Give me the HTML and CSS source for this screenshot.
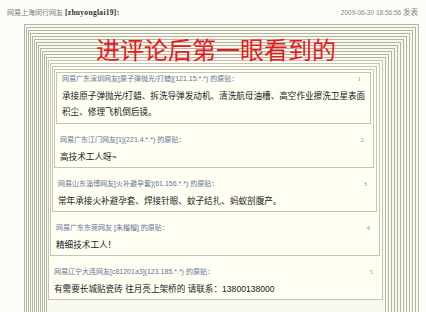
FILE: index.html
```html
<!DOCTYPE html>
<html lang="zh-CN">
<head>
    <meta charset="UTF-8">
    <meta name="viewport" content="width=device-width, initial-scale=1.0">
    <title>网易跟帖</title>
    <link rel="stylesheet" href="styles.css">
</head>
<body>

    <div class="post-head">
        <span class="author">网易上海闵行网友 <b>[zhuyonglai19]:</b></span>
        <span class="time">2009-06-30 18:56:56 <span class="cn">发表</span></span>
    </div>

    <div class="caption">进评论后第一眼看到的</div>

    <div class="thread">
    <div class="floor"><div class="floor"><div class="floor"><div class="floor">
    <div class="floor"><div class="floor"><div class="floor"><div class="floor">
    <div class="floor"><div class="floor"><div class="floor">
    <div class="floor tail">

        <div class="floor post">
        <div class="floor post">
        <div class="floor post">
        <div class="floor post">
        <div class="floor post first">
            <div class="floor-head">
                <span>网易广东深圳网友[原子弹抛光/打蜡](121.15.*.*) 的原贴：</span>
                <span class="num">1</span>
            </div>
            <p class="floor-text">承接原子弹抛光/打蜡、拆洗导弹发动机、清洗航母油槽、高空作业擦洗卫星表面积尘、修理飞机倒后镜。</p>
        </div>
            <div class="floor-head">
                <span>网易广东江门网友[1](221.4.*.*) 的原贴：</span>
                <span class="num">2</span>
            </div>
            <p class="floor-text">高技术工人呀~</p>
        </div>
            <div class="floor-head">
                <span>网易山东淄博网友[火补避孕套](61.156.*.*) 的原贴：</span>
                <span class="num">3</span>
            </div>
            <p class="floor-text">常年承接火补避孕套、焊接针眼、蚊子结扎、蚂蚁剖腹产。</p>
        </div>
            <div class="floor-head">
                <span>网易广东东莞网友 [朱榴榴] 的原贴：</span>
                <span class="num">4</span>
            </div>
            <p class="floor-text">精细技术工人！</p>
        </div>
            <div class="floor-head">
                <span>网易辽宁大连网友[c81201a3](123.185.*.*) 的原贴：</span>
                <span class="num">5</span>
            </div>
            <p class="floor-text">有需要长城贴瓷砖 往月亮上架桥的 请联系：13800138000</p>
        </div>

    </div>
    </div></div></div>
    </div></div></div></div>
    </div></div></div></div>
    </div>

</body>
</html>
```

FILE: styles.css
```css
* {
    margin: 0;
    padding: 0;
    box-sizing: border-box;
}

body {
    background: #fcfcf8;
    font-family: "Liberation Sans", "Noto Sans CJK SC", sans-serif;
    color: #222;
    overflow: hidden;
    height: 312px;
    position: relative;
}

.post-head {
    display: flex;
    justify-content: space-between;
    padding: 8px 8px 0 7px;
    height: 17px;
    font-size: 7px;
    line-height: 9px;
    color: #7a7a7a;
}

.author b {
    font-family: "Liberation Serif", "Noto Sans CJK SC", serif;
    font-size: 7.5px;
    color: #333;
    letter-spacing: 0.3px;
}

.time {
    font-size: 6.5px;
    color: #888;
}

.time .cn {
    font-size: 7.5px;
}

/* the red note pasted over the thread */
.caption {
    position: absolute;
    left: 96px;
    top: 35px;
    font-family: "Noto Sans CJK SC", sans-serif;
    font-size: 24px;
    line-height: 28px;
    color: #ec1820;
    white-space: nowrap;
}

.thread {
    margin: 7px 7px 0 24px;
}

.floor {
    border: 1px solid #b3b4a2;
    border-bottom: none;
    padding: 2px 2px 0 1px;
    background: #f8f8ee;
}

.floor.tail {
    padding-bottom: 60px;
}

.floor.post {
    border: 1px solid #c4c5b6;
    background: #fefef3;
    padding-bottom: 2px;
}

.floor.first {
    padding-top: 0;
    padding-bottom: 3px;
}

.floor-head {
    display: flex;
    justify-content: space-between;
    margin: 10px 7px 0 4px;
    height: 12px;
    font-size: 7px;
    line-height: 12px;
    color: #66759a;
    white-space: nowrap;
}

.first .floor-head {
    margin-top: 0;
}

.num {
    font-family: "Liberation Serif", serif;
    color: #999;
    font-size: 7px;
}

.floor-text {
    margin: 3px 2px 0 4px;
    font-size: 8.6px;
    line-height: 16px;
    color: #222;
}
```
